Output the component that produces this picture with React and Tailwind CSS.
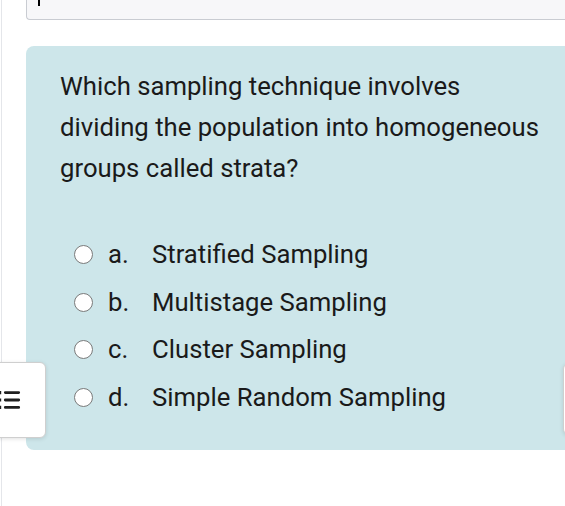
import React from "react";

const options = [
  { letter: "a.", text: "Stratified Sampling" },
  { letter: "b.", text: "Multistage Sampling" },
  { letter: "c.", text: "Cluster Sampling" },
  { letter: "d.", text: "Simple Random Sampling" },
];

function ListIcon() {
  return (
    <svg
      width="24"
      height="22"
      viewBox="0 0 24 22"
      className="block shrink-0 text-[#1f1f1f]"
      fill="currentColor"
    >
      <path d="M0 2h3.2v3.2H0zM0 9.4h3.2v3.2H0zM0 16.8h3.2v3.2H0z" />
      <path d="M7.3 2.2h13.4a1.4 1.4 0 0 1 0 2.8H7.3a1.4 1.4 0 0 1 0-2.8zM7.3 9.6h13.4a1.4 1.4 0 0 1 0 2.8H7.3a1.4 1.4 0 0 1 0-2.8zM7.3 17h13.4a1.4 1.4 0 0 1 0 2.8H7.3a1.4 1.4 0 0 1 0-2.8z" />
    </svg>
  );
}

export default function App() {
  return (
    <div
      className="relative h-[506px] w-[565px] overflow-hidden bg-white"
      style={{ fontFamily: "Roboto, 'Noto Sans', sans-serif" }}
    >
      <div className="ml-[1px] min-h-[506px] border-l border-[#e4e6ea] pl-[24px]">
        <div className="h-[20px] rounded-bl-[4px] border-b border-l border-[#c9ccd2] bg-[#f7f7f9] pl-[11px]">
          <div className="h-[6px] w-[2px] bg-black" />
        </div>

        <div className="mt-[26px] rounded-l-[8px] bg-[#cde6ea] pb-[29px] pl-[34px] pt-[20px] text-[#1a1a1a]">
          <p className="text-[25.7px] leading-[41px]">
            Which sampling technique involves
            <br />
            dividing the population into homogeneous
            <br />
            groups called strata?
          </p>
          <div className="mt-[42px] flex flex-col">
            {options.map((o) => (
              <label key={o.letter} className="flex h-[47.5px] items-center">
                <span className="ml-[14px] h-[19px] w-[19px] shrink-0 rounded-full border-[1.5px] border-[#7a7a7a] bg-white" />
                <span className="ml-[15px] w-[44px] text-[25.7px]">{o.letter}</span>
                <span className="text-[25.7px]">{o.text}</span>
              </label>
            ))}
          </div>
        </div>
      </div>

      <button className="absolute left-[-30px] top-[362px] flex h-[76px] w-[76px] items-center justify-end rounded-[6px] border border-[#cfcfcf] bg-white pr-[23px] shadow-[0_1px_4px_rgba(0,0,0,0.12)]">
        <ListIcon />
      </button>
      <div className="absolute left-[563px] top-[363px] h-[72px] w-[40px] rounded-[6px] border border-[#cfcfcf] bg-white shadow-[0_1px_4px_rgba(0,0,0,0.12)]" />
    </div>
  );
}
